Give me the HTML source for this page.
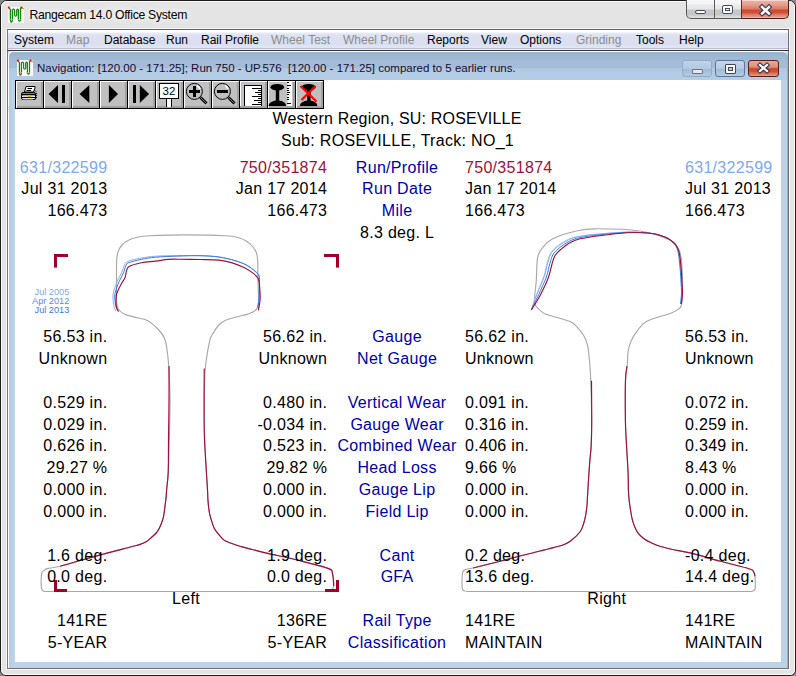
<!DOCTYPE html>
<html><head><meta charset="utf-8">
<style>
html,body{margin:0;padding:0;}
body{width:796px;height:676px;position:relative;overflow:hidden;background:#8a8a8a;font-family:"Liberation Sans",sans-serif;}
.a{position:absolute;}
#outer{left:0;top:0;width:794px;height:674px;border:1px solid #1c1c1c;border-radius:7px 7px 6px 6px;background:#e4e4e4;}
.ttl{left:29.5px;top:7.5px;font-size:12.2px;letter-spacing:-0.28px;color:#000;white-space:pre;text-shadow:0 0 6px #fff,0 0 8px #fff;}
.cb{top:0;height:19px;border:1px solid #5a5a5a;border-top:none;box-sizing:border-box;}
#menubar{left:7px;top:29px;width:782px;height:21px;box-sizing:border-box;border-top:1px solid #646464;border-left:1px solid #777;border-right:1px solid #707070;background:linear-gradient(#ffffff 0px,#ffffff 2px,#e8ebf6 3px,#dde1f1 5px,#dadeef 15px,#dde6f5 16px,#dde6f5 18px,#b8bccc 18px,#b8bccc 19px,#f4f4f8 19px)}
.mi{top:33px;font-size:12px;color:#000;white-space:pre;}
.dis{color:#8d8d8d;}
</style></head><body>
<div id="outer" class="a"></div>
<div class="a" style="left:1px;top:1px;width:792px;height:672px;border:1px solid #fafafa;border-radius:6px 6px 5px 5px;"></div>
<!-- title icon -->
<svg class="a" style="left:6px;top:4px" width="20" height="20" viewBox="6 4 20 20">
<rect x="8" y="7" width="16" height="16" fill="#fff" opacity="0.75"/>
<path d="M8.7 7.4 L10.4 9.6 V19.6 Q10.6 22 11.4 22 Q12.3 22 12.4 19.6 V10.2 Q12.6 9.2 13.5 9.2 Q14.5 9.2 14.6 10.2 V15 Q14.8 16.2 15.6 16.2 Q16.5 16.2 16.7 15 V10.2 Q16.9 9.2 17.6 9.2 Q18.4 9.2 18.4 10.2 V19.6 Q18.6 21 19.4 21 Q20.4 21 20.5 19.6 V8.7 L21.4 7.6 L23.5 8.7" fill="none" stroke="#0c8a0c" stroke-width="1.25"/>
<circle cx="8.8" cy="7.4" r="1" fill="#f00"/><circle cx="21.4" cy="7.6" r="1" fill="#f00"/>
<path d="M10.4 19 V20 M12.4 19 V20 M18.4 19 V20 M20.5 19 V20" stroke="#e09010" stroke-width="1.3"/>
<circle cx="11.3" cy="22" r="0.8" fill="#e04020"/><path d="M22 8 L23.5 8.8" stroke="#f0a030" stroke-width="1.2"/>
</svg>
<div class="a ttl">Rangecam 14.0 Office System</div>
<!-- caption buttons main -->
<div class="a cb" style="left:686px;width:29px;border-radius:0 0 0 5px;background:linear-gradient(#f7f7f7 0px,#f3f3f3 4px,#ececec 5px,#e4e4e4 9px,#c9c9c9 10px,#c6c6c6 15px,#d9d9d9 16px,#dcdcdc 18px);"></div>
<div class="a cb" style="left:714px;width:28px;border-left:1px solid #5a5a5a;border-right:none;background:linear-gradient(#f7f7f7 0px,#f3f3f3 4px,#ececec 5px,#e4e4e4 9px,#c9c9c9 10px,#c6c6c6 15px,#d9d9d9 16px,#dcdcdc 18px);"></div>
<div class="a cb" style="left:741px;width:48px;border-radius:0 0 5px 0;background:linear-gradient(#fdfdfd 0px,#f4aca4 1px,#e8a292 4px,#df8c7a 7px,#d77a66 9px,#cf4a2c 10px,#d4502e 13px,#d67260 14px,#e49c8c 17px,#f0c0b4 18px);border-color:#4a2018;border-left-color:#6a2a20;"></div>
<div class="a" style="left:695px;top:10px;width:9px;height:2px;border:1.5px solid #434a62;border-radius:2px;background:#fff;"></div>
<div class="a" style="left:722px;top:5px;width:9px;height:7px;border:1.5px solid #434a62;border-radius:2px;background:#fff;"></div>
<div class="a" style="left:725px;top:8px;width:3px;height:1px;border:1.5px solid #434a62;background:#fff;"></div>
<svg class="a" style="left:756px;top:2px" width="20" height="16" viewBox="0 0 20 16"><path d="M6 5 L13 11.5 M13 5 L6 11.5" stroke="#343a50" stroke-width="4.6" stroke-linecap="square"/><path d="M6 5 L13 11.5 M13 5 L6 11.5" stroke="#fff" stroke-width="2.4" stroke-linecap="square"/></svg>

<div id="menubar" class="a"></div>
<div class="a mi" style="left:14px">System</div>
<div class="a mi dis" style="left:66px">Map</div>
<div class="a mi" style="left:104px">Database</div>
<div class="a mi" style="left:166px">Run</div>
<div class="a mi" style="left:201px">Rail Profile</div>
<div class="a mi dis" style="left:271px">Wheel Test</div>
<div class="a mi dis" style="left:343px">Wheel Profile</div>
<div class="a mi" style="left:427px">Reports</div>
<div class="a mi" style="left:481px">View</div>
<div class="a mi" style="left:520px">Options</div>
<div class="a mi dis" style="left:576px">Grinding</div>
<div class="a mi" style="left:636px">Tools</div>
<div class="a mi" style="left:679px">Help</div>

<!-- MDI client edge -->
<div class="a" style="left:6px;top:28px;width:784px;height:642px;box-sizing:border-box;border:1px solid #f8f8f8;"></div>
<div class="a" style="left:7px;top:50px;width:782px;height:619px;box-sizing:border-box;border-top:1px solid #303030;border-left:1px solid #777;border-bottom:1px solid #707070;border-right:1px solid #707070;"></div>
<!-- child frame -->
<div class="a" style="left:8px;top:51px;width:780px;height:617px;box-sizing:border-box;border-top:1px solid #fff;border-left:1px solid #fff;border-right:1px solid #40d0f8;background:#bcd2e8;border-radius:5px 5px 0 0;"></div>
<div class="a" style="left:9px;top:52px;width:778px;height:28px;background:linear-gradient(#9bb4d0 0px,#9bb4d0 4px,#9fb8d4 4px,#9fb8d4 8px,#a4bcd8 8px,#a4bcd8 16px,#b2c6df 16px,#b4c8e0 20px,#b4cde6 20px,#b4cde6 28px);border-radius:5px 5px 0 0;"></div>
<div class="a" style="left:9px;top:80px;width:6px;height:588px;background:linear-gradient(90deg,#b4cbe4,#c0d5ea);"></div>
<div id="content" class="a" style="left:15px;top:80px;width:766px;height:582px;background:#fff;"></div>

<!-- child caption -->
<svg class="a" style="left:15px;top:57px" width="20" height="20" viewBox="6 4 20 20">
<rect x="8" y="7" width="16" height="16" fill="#fff"/>
<path d="M8.7 7.4 L10.4 9.6 V19.6 Q10.6 22 11.4 22 Q12.3 22 12.4 19.6 V10.2 Q12.6 9.2 13.5 9.2 Q14.5 9.2 14.6 10.2 V15 Q14.8 16.2 15.6 16.2 Q16.5 16.2 16.7 15 V10.2 Q16.9 9.2 17.6 9.2 Q18.4 9.2 18.4 10.2 V19.6 Q18.6 21 19.4 21 Q20.4 21 20.5 19.6 V8.7 L21.4 7.6 L23.5 8.7" fill="none" stroke="#0c8a0c" stroke-width="1.25"/>
<circle cx="8.8" cy="7.4" r="1" fill="#f00"/><circle cx="21.4" cy="7.6" r="1" fill="#f00"/>
<path d="M10.4 19 V20 M12.4 19 V20 M18.4 19 V20 M20.5 19 V20" stroke="#e09010" stroke-width="1.3"/>
<circle cx="11.3" cy="22" r="0.8" fill="#e04020"/><path d="M22 8 L23.5 8.8" stroke="#f0a030" stroke-width="1.2"/>
</svg>
<div class="a" style="left:37px;top:62.3px;font-size:11.5px;color:#180c30;white-space:pre;">Navigation: [120.00 - 171.25]; Run 750 - UP.576  [120.00 - 171.25] compared to 5 earlier runs.</div>
<div class="a" style="left:682px;top:60px;width:30px;height:17px;box-sizing:border-box;border:1px solid #94abc6;border-radius:3px;background:linear-gradient(#c0d3e8,#b3c9e2 50%,#a2bad6 52%,#b3c9e2);"></div>
<div class="a" style="left:715px;top:60px;width:30px;height:17px;box-sizing:border-box;border:1px solid #5f7696;border-radius:3px;background:linear-gradient(#c6d7ec,#b5cbe4 50%,#a0b9d6 52%,#b5cbe4);"></div>
<div class="a" style="left:748px;top:60px;width:31px;height:17px;box-sizing:border-box;border:1px solid #5a2018;border-radius:3px;background:linear-gradient(#eca698,#e0907c 40%,#c9462c 52%,#cf5238 70%,#e0a08c);"></div>
<div class="a" style="left:692px;top:69px;width:9px;height:3px;border:1px solid #6c7080;border-radius:1px;background:#e8e8e8;"></div>
<div class="a" style="left:725px;top:64px;width:9px;height:7px;border:1.5px solid #404658;border-radius:1px;background:#fff;box-sizing:border-box;width:11px;height:10px;"></div>
<div class="a" style="left:728px;top:67px;width:5px;height:4px;border:1.5px solid #404658;background:#c0d0e4;box-sizing:border-box;"></div>
<svg class="a" style="left:754px;top:60px" width="20" height="16" viewBox="0 0 20 16"><path d="M6 5 L13 11 M13 5 L6 11" stroke="#343a50" stroke-width="4.4" stroke-linecap="square"/><path d="M6 5 L13 11 M13 5 L6 11" stroke="#fff" stroke-width="2.3" stroke-linecap="square"/></svg>
<svg class="a" style="left:0;top:0" width="796" height="676" viewBox="0 0 796 676"><g transform="translate(15,80)"><rect x="0" y="0" width="29" height="29" fill="#000"/><rect x="1" y="1" width="27" height="27" fill="#fff"/><rect x="2" y="2" width="26" height="26" fill="#a0a0a0"/><rect x="2" y="2" width="24" height="24" fill="#c0c0c0"/></g><g transform="translate(43,80)"><rect x="0" y="0" width="29" height="29" fill="#000"/><rect x="1" y="1" width="27" height="27" fill="#fff"/><rect x="2" y="2" width="26" height="26" fill="#a0a0a0"/><rect x="2" y="2" width="24" height="24" fill="#c0c0c0"/></g><g transform="translate(71,80)"><rect x="0" y="0" width="29" height="29" fill="#000"/><rect x="1" y="1" width="27" height="27" fill="#fff"/><rect x="2" y="2" width="26" height="26" fill="#a0a0a0"/><rect x="2" y="2" width="24" height="24" fill="#c0c0c0"/></g><g transform="translate(99,80)"><rect x="0" y="0" width="29" height="29" fill="#000"/><rect x="1" y="1" width="27" height="27" fill="#fff"/><rect x="2" y="2" width="26" height="26" fill="#a0a0a0"/><rect x="2" y="2" width="24" height="24" fill="#c0c0c0"/></g><g transform="translate(127,80)"><rect x="0" y="0" width="29" height="29" fill="#000"/><rect x="1" y="1" width="27" height="27" fill="#fff"/><rect x="2" y="2" width="26" height="26" fill="#a0a0a0"/><rect x="2" y="2" width="24" height="24" fill="#c0c0c0"/></g><g transform="translate(155,80)"><rect x="0" y="0" width="29" height="29" fill="#000"/><rect x="1" y="1" width="27" height="27" fill="#fff"/><rect x="2" y="2" width="26" height="26" fill="#a0a0a0"/><rect x="2" y="2" width="24" height="24" fill="#c0c0c0"/></g><g transform="translate(183,80)"><rect x="0" y="0" width="29" height="29" fill="#000"/><rect x="1" y="1" width="27" height="27" fill="#fff"/><rect x="2" y="2" width="26" height="26" fill="#a0a0a0"/><rect x="2" y="2" width="24" height="24" fill="#c0c0c0"/></g><g transform="translate(211,80)"><rect x="0" y="0" width="29" height="29" fill="#000"/><rect x="1" y="1" width="27" height="27" fill="#fff"/><rect x="2" y="2" width="26" height="26" fill="#a0a0a0"/><rect x="2" y="2" width="24" height="24" fill="#c0c0c0"/></g><g transform="translate(239,80)"><rect x="0" y="0" width="29" height="29" fill="#000"/><rect x="1" y="1" width="27" height="27" fill="#fff"/><rect x="2" y="2" width="26" height="26" fill="#a0a0a0"/><rect x="2" y="2" width="24" height="24" fill="#c0c0c0"/></g><g transform="translate(267,80)"><rect x="0" y="0" width="29" height="29" fill="#000"/><rect x="1" y="1" width="27" height="27" fill="#fff"/><rect x="2" y="2" width="26" height="26" fill="#a0a0a0"/><rect x="2" y="2" width="24" height="24" fill="#c0c0c0"/></g><g transform="translate(295,80)"><rect x="0" y="0" width="29" height="29" fill="#000"/><rect x="1" y="1" width="27" height="27" fill="#fff"/><rect x="2" y="2" width="26" height="26" fill="#a0a0a0"/><rect x="2" y="2" width="24" height="24" fill="#c0c0c0"/></g>
<!-- printer bx=15 -->
<g transform="translate(15,80)">
<path d="M11 6.5 H20 V8 L18.5 12 H9.5 Z" fill="#fff" stroke="#000" stroke-width="1"/>
<path d="M12.5 8.5 H17 M11.5 10.5 H16" stroke="#000" stroke-width="1"/>
<rect x="6.5" y="12.5" width="14" height="7" rx="1.5" fill="#fff" stroke="#000" stroke-width="1"/>
<rect x="7" y="13.5" width="13" height="2" fill="#000"/>
<rect x="8" y="15.5" width="11" height="1.5" fill="#d8d8d8"/>
<rect x="13" y="15.5" width="3" height="1.5" fill="#e8c000"/>
<rect x="7" y="17" width="13" height="1" fill="#000"/>
<rect x="8" y="18.5" width="10" height="1" fill="#d0d0d0"/>
<path d="M19.5 10 L21.5 12 L21.5 18 L20 19.5" fill="none" stroke="#000" stroke-width="1" stroke-dasharray="1 1"/>
</g>
<g transform="translate(43,80)"><path d="M5.6 13.9 L15 4.9 V23 Z" fill="#000"/><rect x="19" y="5" width="3" height="18" fill="#000"/></g>
<g transform="translate(71,80)"><path d="M8.6 13.9 L18.3 4.9 V23 Z" fill="#000"/></g>
<g transform="translate(99,80)"><path d="M19 13.9 L9.9 4.9 V23 Z" fill="#000"/></g>
<g transform="translate(127,80)"><path d="M22.1 13.9 L12.8 4.9 V23 Z" fill="#000"/><rect x="6" y="5" width="3" height="18" fill="#000"/></g>
<g transform="translate(155,80)">
<rect x="4.5" y="3.5" width="19" height="15" fill="#fff" stroke="#000" stroke-width="1"/>
<text x="14" y="15" text-anchor="middle" font-family="Liberation Sans" font-size="11.5" fill="#000">32</text>
<rect x="11" y="19" width="6" height="8" fill="#fff"/>
<rect x="11" y="19" width="1" height="8" fill="#000"/><rect x="16" y="19" width="1" height="8" fill="#000"/>
</g>
<g transform="translate(183,80)">
<path d="M17.5 17.5 L23.5 23.5" stroke="#000" stroke-width="3"/><path d="M17.5 17.5 L23.5 23.5" stroke="#808080" stroke-width="1"/>
<circle cx="11.4" cy="11.4" r="8" fill="#c0c0c0" stroke="#000" stroke-width="1"/>
<path d="M14 5.5 A6.5 6.5 0 0 1 17 9" fill="none" stroke="#fff" stroke-width="1.5"/>
<rect x="6" y="10" width="11" height="3" fill="#000"/><rect x="10" y="6" width="3" height="11" fill="#000"/>
</g>
<g transform="translate(211,80)">
<path d="M17.5 17.5 L23.5 23.5" stroke="#000" stroke-width="3"/><path d="M17.5 17.5 L23.5 23.5" stroke="#808080" stroke-width="1"/>
<circle cx="11.4" cy="11.4" r="8" fill="#c0c0c0" stroke="#000" stroke-width="1"/>
<path d="M14 5.5 A6.5 6.5 0 0 1 17 9" fill="none" stroke="#fff" stroke-width="1.5"/>
<rect x="6" y="10" width="11" height="3" fill="#000"/>
</g>
<g transform="translate(239,80)">
<rect x="5.5" y="5.5" width="17" height="21" fill="#fff" stroke="#000" stroke-width="1"/>
<path d="M13 8.5 H22 M19 10.5 H22 M16 12.5 H22 M19 14.5 H22 M13 16.5 H22 M19 18.5 H22 M15 20.5 H22 M19 22.5 H22 M13 24.5 H22" stroke="#000" stroke-width="1"/>
<rect x="1" y="26" width="26" height="2" fill="#a0a0a0"/>
</g>
<g transform="translate(267,80)">
<ellipse cx="10.3" cy="7.2" rx="6.8" ry="3.3" fill="#000"/>
<rect x="8.8" y="9" width="3.4" height="12" fill="#000"/>
<path d="M1.5 26 C2 22 6 21 9 20.5 H12 C15 21 19 22 19 26 Z" fill="#000"/>
<rect x="20.5" y="2" width="4.5" height="24" fill="#fff"/>
<path d="M20 2.5 H22 M20 5.5 H24 M20 8.5 H22 M20 10.5 H22 M20 12.5 H23 M20 14.5 H22 M20 17.5 H22 M20 19.5 H22 M20 23.5 H24" stroke="#000" stroke-width="1"/>
</g>
<g transform="translate(295,80)">
<ellipse cx="13.7" cy="7.2" rx="6.8" ry="3.3" fill="#000"/>
<rect x="12.2" y="9" width="3.4" height="12" fill="#000"/>
<path d="M4.8 26 C5.3 22 9.3 21 12.3 20.5 H15.3 C18.3 21 22.3 22 22.3 26 Z" fill="#000"/>
<path d="M5.5 6 L21.5 21.5 M20.5 6 L6.5 20" stroke="#ff0000" stroke-width="2.2"/>
</g>
</svg>
<svg class="a" style="left:0;top:0" width="796" height="676" viewBox="0 0 796 676" font-family="Liberation Sans" font-size="16" letter-spacing="0.3"><path d="M44.30 591.50 C43.85 591.00 42.05 591.42 41.60 588.50 C41.15 585.58 41.20 577.00 41.60 574.00 C42.00 571.00 42.93 571.43 44.00 570.50 C45.07 569.57 45.30 569.12 48.00 568.40 C50.70 567.68 51.90 568.33 60.20 566.20 C68.50 564.07 85.92 558.83 97.80 555.60 C109.68 552.37 124.55 548.63 131.50 546.80 C138.45 544.97 136.98 545.48 139.50 544.60 C142.02 543.72 144.53 542.77 146.60 541.50 C148.67 540.23 150.12 538.63 151.90 537.00 C153.68 535.37 155.73 533.92 157.30 531.70 C158.87 529.48 160.27 526.22 161.30 523.70 C162.33 521.18 162.92 519.27 163.50 516.60 C164.08 513.93 164.37 510.95 164.80 507.70 C165.23 504.45 165.80 500.05 166.10 497.10 C166.40 494.15 166.25 494.08 166.60 490.00 C166.95 485.92 167.75 480.93 168.20 472.60 C168.65 464.27 169.00 452.10 169.30 440.00 C169.60 427.90 170.02 410.83 170.00 400.00 C169.98 389.17 169.42 380.83 169.20 375.00 C168.98 369.17 169.08 369.33 168.70 365.00 C168.32 360.67 167.58 353.43 166.90 349.00 C166.22 344.57 166.02 341.65 164.60 338.40 C163.18 335.15 161.20 332.45 158.40 329.50 C155.60 326.55 151.77 322.77 147.80 320.70 C143.83 318.63 138.47 318.17 134.60 317.10 C130.73 316.03 127.28 315.60 124.60 314.30 C121.92 313.00 119.88 311.68 118.50 309.30 C117.12 306.92 116.63 303.32 116.30 300.00 C115.97 296.68 116.45 295.73 116.50 289.40 C116.55 283.07 116.35 268.23 116.60 262.00 C116.85 255.77 117.10 254.83 118.00 252.00 C118.90 249.17 120.33 246.92 122.00 245.00 C123.67 243.08 125.50 241.78 128.00 240.50 C130.50 239.22 133.33 238.10 137.00 237.30 C140.67 236.50 141.67 236.10 150.00 235.70 C158.33 235.30 174.50 234.90 187.00 234.90 C199.50 234.90 216.50 235.27 225.00 235.70 C233.50 236.13 234.33 236.53 238.00 237.50 C241.67 238.47 244.50 239.92 247.00 241.50 C249.50 243.08 251.42 245.08 253.00 247.00 C254.58 248.92 255.70 250.50 256.50 253.00 C257.30 255.50 257.58 258.30 257.80 262.00 C258.02 265.70 257.70 268.40 257.80 275.20 C257.90 282.00 258.82 296.93 258.40 302.80 C257.98 308.67 257.07 308.52 255.30 310.40 C253.53 312.28 251.15 312.95 247.80 314.10 C244.45 315.25 238.98 316.25 235.20 317.30 C231.42 318.35 227.82 319.12 225.10 320.40 C222.38 321.68 221.08 322.57 218.90 325.00 C216.72 327.43 213.50 332.47 212.00 335.00 C210.50 337.53 210.85 336.08 209.90 340.20 C208.95 344.32 207.18 352.90 206.30 359.70 C205.42 366.50 204.90 369.28 204.60 381.00 C204.30 392.72 204.27 415.92 204.50 430.00 C204.73 444.08 205.50 455.50 206.00 465.50 C206.50 475.50 207.17 484.15 207.50 490.00 C207.83 495.85 207.70 496.90 208.00 500.60 C208.30 504.30 208.78 509.08 209.30 512.20 C209.82 515.32 210.28 516.63 211.10 519.30 C211.92 521.97 212.95 525.68 214.20 528.20 C215.45 530.72 216.97 532.42 218.60 534.40 C220.23 536.38 221.92 538.63 224.00 540.10 C226.08 541.57 228.45 542.17 231.10 543.20 C233.75 544.23 236.35 545.25 239.90 546.30 C243.45 547.35 247.77 548.32 252.40 549.50 C257.03 550.68 260.13 551.62 267.70 553.40 C275.27 555.18 287.75 557.70 297.80 560.20 C307.85 562.70 322.22 566.15 328.00 568.40 C333.78 570.65 331.55 570.77 332.50 573.70 C333.45 576.63 333.95 583.03 333.70 586.00 C333.45 588.97 331.45 590.58 331.00 591.50" fill="none" stroke="#a8a8a8" stroke-width="1.15"/><path d="M465.60 591.30 C465.05 590.80 462.82 591.32 462.30 588.30 C461.78 585.28 461.95 576.33 462.50 573.20 C463.05 570.07 463.83 570.37 465.60 569.50 C467.37 568.63 467.33 569.38 473.10 568.00 C478.87 566.62 491.92 563.33 500.20 561.20 C508.48 559.07 516.17 556.90 522.80 555.20 C529.43 553.50 535.65 552.07 540.00 551.00 C544.35 549.93 545.20 549.75 548.90 548.80 C552.60 547.85 558.65 546.55 562.20 545.30 C565.75 544.05 567.25 543.52 570.20 541.30 C573.15 539.08 577.68 534.88 579.90 532.00 C582.12 529.12 582.53 526.82 583.50 524.00 C584.47 521.18 585.12 518.22 585.70 515.10 C586.28 511.98 586.70 508.43 587.00 505.30 C587.30 502.17 587.10 502.82 587.50 496.30 C587.90 489.78 588.78 474.77 589.40 466.20 C590.02 457.63 590.82 452.60 591.20 444.90 C591.58 437.20 591.82 431.72 591.70 420.00 C591.58 408.28 591.00 385.72 590.50 374.60 C590.00 363.48 589.23 358.33 588.70 353.30 C588.17 348.27 588.13 347.37 587.30 344.40 C586.47 341.43 585.48 338.47 583.70 335.50 C581.92 332.53 578.97 328.97 576.60 326.60 C574.23 324.23 574.22 323.23 569.50 321.30 C564.78 319.37 552.78 316.48 548.30 315.00 C543.82 313.52 544.65 313.90 542.60 312.40 C540.55 310.90 537.37 308.07 536.00 306.00 C534.63 303.93 534.35 304.28 534.40 300.00 C534.45 295.72 535.77 287.35 536.30 280.30 C536.83 273.25 536.55 263.15 537.60 257.70 C538.65 252.25 540.08 250.75 542.60 247.60 C545.12 244.45 547.25 241.52 552.70 238.80 C558.15 236.08 568.28 232.97 575.30 231.30 C582.32 229.63 584.08 228.85 594.80 228.80 C605.52 228.75 627.15 229.13 639.60 231.00 C652.05 232.87 662.92 236.73 669.50 240.00 C676.08 243.27 677.03 246.43 679.10 250.60 C681.17 254.77 681.43 256.45 681.90 265.00 C682.37 273.55 682.55 294.50 681.90 301.90 C681.25 309.30 679.98 307.47 678.00 309.40 C676.02 311.33 675.20 311.52 670.00 313.50 C664.80 315.48 652.30 318.37 646.80 321.30 C641.30 324.23 639.67 327.70 637.00 331.10 C634.33 334.50 632.28 338.30 630.80 341.70 C629.32 345.10 628.70 347.50 628.10 351.50 C627.50 355.50 627.63 360.95 627.20 365.70 C626.77 370.45 625.80 370.95 625.50 380.00 C625.20 389.05 625.27 409.78 625.40 420.00 C625.53 430.22 625.85 432.42 626.30 441.30 C626.75 450.18 627.75 465.18 628.10 473.30 C628.45 481.42 628.20 485.30 628.40 490.00 C628.60 494.70 628.93 498.10 629.30 501.50 C629.67 504.90 630.15 507.58 630.60 510.40 C631.05 513.22 631.40 515.88 632.00 518.40 C632.60 520.92 633.25 523.13 634.20 525.50 C635.15 527.87 636.07 530.38 637.70 532.60 C639.33 534.82 641.77 537.10 644.00 538.80 C646.23 540.50 648.45 541.55 651.10 542.80 C653.75 544.05 656.35 545.18 659.90 546.30 C663.45 547.42 667.35 548.40 672.40 549.50 C677.45 550.60 682.22 550.95 690.20 552.90 C698.18 554.85 710.50 558.57 720.30 561.20 C730.10 563.83 743.47 566.95 749.00 568.70 C754.53 570.45 752.50 570.43 753.50 571.70 C754.50 572.97 754.75 573.40 755.00 576.30 C755.25 579.20 755.50 586.60 755.00 589.10 C754.50 591.60 752.50 590.93 752.00 591.30" fill="none" stroke="#a8a8a8" stroke-width="1.15"/><path d="M44.3 591.5 H331" stroke="#a8a8a8" stroke-width="1" shape-rendering="crispEdges"/><path d="M465.6 591.3 H752" stroke="#a8a8a8" stroke-width="1" shape-rendering="crispEdges"/><path d="M115.70 311.10 C115.43 310.31 114.50 308.69 114.04 306.36 C113.57 304.02 112.89 299.82 112.90 297.10 C112.91 294.38 113.31 292.71 114.07 290.01 C114.83 287.31 116.14 283.88 117.45 280.89 C118.76 277.89 120.78 274.61 121.92 272.02 C123.06 269.43 123.32 267.13 124.31 265.35 C125.30 263.57 125.07 262.53 127.86 261.32 C130.65 260.12 136.41 258.96 141.03 258.11 C145.66 257.25 149.47 256.62 155.61 256.21 C161.75 255.79 170.48 255.69 177.88 255.60 C185.28 255.52 193.16 255.47 200.00 255.70 C206.84 255.93 213.03 256.17 218.90 257.00 C224.77 257.83 230.60 259.35 235.20 260.70 C239.80 262.05 243.15 263.32 246.50 265.10 C249.85 266.88 253.20 269.52 255.30 271.40 C257.40 273.28 258.43 273.25 259.10 276.40 C259.77 279.55 259.35 286.32 259.30 290.30 C259.25 294.28 259.05 297.37 258.80 300.30 C258.55 303.23 257.97 306.63 257.80 307.90" fill="none" stroke="#88b0f0" stroke-width="1.0"/><path d="M117.40 310.50 C117.13 309.75 116.25 308.23 115.80 306.00 C115.35 303.77 114.70 299.68 114.70 297.10 C114.70 294.52 115.07 293.08 115.80 290.50 C116.53 287.92 117.82 284.57 119.10 281.60 C120.38 278.63 122.38 275.28 123.50 272.70 C124.62 270.12 124.97 267.75 125.80 266.10 C126.63 264.45 125.92 263.92 128.50 262.80 C131.08 261.68 136.77 260.33 141.30 259.40 C145.83 258.47 149.60 257.75 155.70 257.20 C161.80 256.65 170.52 256.35 177.90 256.10 C185.28 255.85 193.17 255.55 200.00 255.70 C206.83 255.85 213.03 256.17 218.90 257.00 C224.77 257.83 230.60 259.35 235.20 260.70 C239.80 262.05 243.15 263.32 246.50 265.10 C249.85 266.88 253.20 269.52 255.30 271.40 C257.40 273.28 258.43 273.25 259.10 276.40 C259.77 279.55 259.35 286.32 259.30 290.30 C259.25 294.28 259.05 297.37 258.80 300.30 C258.55 303.23 257.97 306.63 257.80 307.90" fill="none" stroke="#3c78e0" stroke-width="1.0"/><path d="M118.50 311.60 C118.13 310.67 116.67 308.60 116.30 306.00 C115.93 303.40 116.02 298.58 116.30 296.00 C116.58 293.42 117.13 292.58 118.00 290.50 C118.87 288.42 120.30 285.72 121.50 283.50 C122.70 281.28 124.40 279.18 125.20 277.20 C126.00 275.22 125.65 273.37 126.30 271.60 C126.95 269.83 126.60 268.07 129.10 266.60 C131.60 265.13 136.87 263.72 141.30 262.80 C145.73 261.88 151.27 261.67 155.70 261.10 C160.13 260.53 164.20 259.72 167.90 259.40 C171.60 259.08 172.55 259.18 177.90 259.20 C183.25 259.22 193.17 259.35 200.00 259.50 C206.83 259.65 213.67 259.58 218.90 260.10 C224.13 260.62 227.22 261.35 231.40 262.60 C235.58 263.85 240.23 265.72 244.00 267.60 C247.77 269.48 251.60 272.00 254.00 273.90 C256.40 275.80 257.45 276.68 258.40 279.00 C259.35 281.32 259.42 284.45 259.70 287.80 C259.98 291.15 260.32 295.33 260.10 299.10 C259.88 302.87 258.68 308.52 258.40 310.40" fill="none" stroke="#a0103c" stroke-width="1.15"/><path d="M60.20 566.20 C66.47 564.43 85.92 558.83 97.80 555.60 C109.68 552.37 124.55 548.63 131.50 546.80 C138.45 544.97 136.98 545.48 139.50 544.60 C142.02 543.72 144.53 542.77 146.60 541.50 C148.67 540.23 150.12 538.63 151.90 537.00 C153.68 535.37 155.73 533.92 157.30 531.70 C158.87 529.48 160.27 526.22 161.30 523.70 C162.33 521.18 162.92 519.27 163.50 516.60 C164.08 513.93 164.37 510.95 164.80 507.70 C165.23 504.45 165.80 500.05 166.10 497.10 C166.40 494.15 166.25 494.08 166.60 490.00 C166.95 485.92 167.88 480.93 168.20 472.60 C168.52 464.27 168.37 452.10 168.50 440.00 C168.63 427.90 168.92 412.33 169.00 400.00 C169.08 387.67 169.00 371.67 169.00 366.00" fill="none" stroke="#a0103c" stroke-width="1.15"/><path d="M204.20 368.60 C204.20 378.83 203.90 413.85 204.20 430.00 C204.50 446.15 205.45 455.50 206.00 465.50 C206.55 475.50 207.17 484.15 207.50 490.00 C207.83 495.85 207.70 496.90 208.00 500.60 C208.30 504.30 208.78 509.08 209.30 512.20 C209.82 515.32 210.28 516.63 211.10 519.30 C211.92 521.97 212.95 525.68 214.20 528.20 C215.45 530.72 216.97 532.42 218.60 534.40 C220.23 536.38 221.92 538.63 224.00 540.10 C226.08 541.57 228.45 542.17 231.10 543.20 C233.75 544.23 236.35 545.25 239.90 546.30 C243.45 547.35 247.77 548.32 252.40 549.50 C257.03 550.68 260.13 551.62 267.70 553.40 C275.27 555.18 287.75 557.70 297.80 560.20 C307.85 562.70 322.22 566.15 328.00 568.40 C333.78 570.65 331.55 570.77 332.50 573.70 C333.45 576.63 333.50 583.95 333.70 586.00" fill="none" stroke="#a0103c" stroke-width="1.15"/><path d="M531.30 309.90 C532.21 307.19 534.69 299.28 536.79 293.64 C538.88 288.01 542.12 281.30 543.86 276.12 C545.60 270.93 546.03 266.47 547.22 262.54 C548.40 258.61 549.09 255.42 550.97 252.54 C552.84 249.66 555.53 247.46 558.46 245.25 C561.38 243.05 564.99 240.82 568.53 239.30 C572.06 237.78 574.59 237.01 579.66 236.13 C584.74 235.24 591.12 234.64 598.97 233.96 C606.82 233.29 619.09 232.30 626.76 232.10 C634.43 231.91 640.29 232.48 645.00 232.80 C649.71 233.12 652.17 233.47 655.00 234.00 C657.83 234.53 659.83 235.25 662.00 236.00 C664.17 236.75 666.17 237.50 668.00 238.50 C669.83 239.50 671.58 240.75 673.00 242.00 C674.42 243.25 675.58 244.67 676.50 246.00 C677.42 247.33 677.95 248.33 678.50 250.00 C679.05 251.67 679.45 253.83 679.80 256.00 C680.15 258.17 680.33 260.33 680.60 263.00 C680.87 265.67 681.17 268.83 681.40 272.00 C681.63 275.17 681.82 278.50 682.00 282.00 C682.18 285.50 682.62 289.33 682.50 293.00 C682.38 296.67 681.50 302.17 681.30 304.00" fill="none" stroke="#a8c8f4" stroke-width="1.0"/><path d="M531.30 309.90 C532.28 307.23 535.00 299.45 537.18 293.86 C539.37 288.26 542.62 281.51 544.39 276.32 C546.16 271.13 546.61 266.63 547.79 262.72 C548.97 258.80 549.64 255.69 551.48 252.86 C553.31 250.02 555.94 247.88 558.82 245.69 C561.70 243.50 565.25 241.23 568.74 239.69 C572.22 238.15 574.69 237.37 579.74 236.45 C584.78 235.53 591.16 234.89 599.00 234.17 C606.84 233.46 619.10 232.40 626.77 232.17 C634.43 231.94 640.29 232.50 645.00 232.80 C649.71 233.10 652.17 233.47 655.00 234.00 C657.83 234.53 659.83 235.25 662.00 236.00 C664.17 236.75 666.17 237.50 668.00 238.50 C669.83 239.50 671.58 240.75 673.00 242.00 C674.42 243.25 675.58 244.67 676.50 246.00 C677.42 247.33 677.95 248.33 678.50 250.00 C679.05 251.67 679.45 253.83 679.80 256.00 C680.15 258.17 680.33 260.33 680.60 263.00 C680.87 265.67 681.17 268.83 681.40 272.00 C681.63 275.17 681.82 278.50 682.00 282.00 C682.18 285.50 682.62 289.33 682.50 293.00 C682.38 296.67 681.50 302.17 681.30 304.00" fill="none" stroke="#88b0f0" stroke-width="1.0"/><path d="M531.30 309.90 C532.52 307.35 536.13 300.10 538.64 294.63 C541.15 289.15 544.47 282.27 546.35 277.06 C548.22 271.85 548.73 267.20 549.90 263.36 C551.06 259.52 551.63 256.71 553.34 254.03 C555.05 251.35 557.46 249.44 560.16 247.30 C562.86 245.15 566.21 242.76 569.52 241.15 C572.83 239.53 575.09 238.66 580.02 237.62 C584.95 236.59 591.31 235.80 599.10 234.94 C606.89 234.07 619.13 232.79 626.78 232.44 C634.43 232.08 640.30 232.54 645.00 232.80 C649.70 233.06 652.17 233.47 655.00 234.00 C657.83 234.53 659.83 235.25 662.00 236.00 C664.17 236.75 666.20 237.46 668.00 238.50 C669.80 239.54 671.47 240.92 672.80 242.22 C674.14 243.53 675.20 245.00 676.01 246.34 C676.81 247.68 677.18 248.65 677.65 250.28 C678.11 251.92 678.49 254.02 678.81 256.16 C679.14 258.30 679.34 260.45 679.60 263.10 C679.87 265.75 680.17 268.91 680.40 272.07 C680.64 275.23 680.82 278.57 681.00 282.05 C681.18 285.53 681.58 289.32 681.50 292.97 C681.42 296.61 680.67 302.09 680.50 303.91" fill="none" stroke="#3c78e0" stroke-width="1.0"/><path d="M531.30 309.90 C532.77 307.48 537.27 300.75 540.10 295.40 C542.93 290.05 546.32 283.03 548.30 277.80 C550.28 272.57 550.85 267.77 552.00 264.00 C553.15 260.23 553.62 257.72 555.20 255.20 C556.78 252.68 558.98 251.00 561.50 248.90 C564.02 246.80 567.17 244.28 570.30 242.60 C573.43 240.92 575.48 239.95 580.30 238.80 C585.12 237.65 591.45 236.72 599.20 235.70 C606.95 234.68 619.17 233.18 626.80 232.70 C634.43 232.22 640.30 232.58 645.00 232.80 C649.70 233.02 652.17 233.47 655.00 234.00 C657.83 234.53 659.83 235.25 662.00 236.00 C664.17 236.75 666.17 237.50 668.00 238.50 C669.83 239.50 671.58 240.75 673.00 242.00 C674.42 243.25 675.58 244.67 676.50 246.00 C677.42 247.33 677.95 248.33 678.50 250.00 C679.05 251.67 679.45 253.83 679.80 256.00 C680.15 258.17 680.33 260.33 680.60 263.00 C680.87 265.67 681.17 268.83 681.40 272.00 C681.63 275.17 681.82 278.50 682.00 282.00 C682.18 285.50 682.62 289.33 682.50 293.00 C682.38 296.67 681.50 302.17 681.30 304.00" fill="none" stroke="#a0103c" stroke-width="1.15"/><path d="M473.10 568.00 C477.62 566.87 491.92 563.33 500.20 561.20 C508.48 559.07 516.17 556.90 522.80 555.20 C529.43 553.50 535.65 552.07 540.00 551.00 C544.35 549.93 545.20 549.75 548.90 548.80 C552.60 547.85 558.65 546.55 562.20 545.30 C565.75 544.05 567.25 543.52 570.20 541.30 C573.15 539.08 577.68 534.88 579.90 532.00 C582.12 529.12 582.53 526.82 583.50 524.00 C584.47 521.18 585.12 518.22 585.70 515.10 C586.28 511.98 586.70 508.43 587.00 505.30 C587.30 502.17 587.10 502.82 587.50 496.30 C587.90 489.78 588.78 474.77 589.40 466.20 C590.02 457.63 590.82 452.60 591.20 444.90 C591.58 437.20 591.65 430.68 591.70 420.00 C591.75 409.32 591.53 387.33 591.50 380.80" fill="none" stroke="#a0103c" stroke-width="1.15"/><path d="M627.00 366.00 C626.75 368.33 625.77 371.00 625.50 380.00 C625.23 389.00 625.27 409.78 625.40 420.00 C625.53 430.22 625.85 432.42 626.30 441.30 C626.75 450.18 627.75 465.18 628.10 473.30 C628.45 481.42 628.20 485.30 628.40 490.00 C628.60 494.70 628.93 498.10 629.30 501.50 C629.67 504.90 630.15 507.58 630.60 510.40 C631.05 513.22 631.40 515.88 632.00 518.40 C632.60 520.92 633.25 523.13 634.20 525.50 C635.15 527.87 636.07 530.38 637.70 532.60 C639.33 534.82 641.77 537.10 644.00 538.80 C646.23 540.50 648.45 541.55 651.10 542.80 C653.75 544.05 656.35 545.18 659.90 546.30 C663.45 547.42 667.35 548.40 672.40 549.50 C677.45 550.60 682.22 550.95 690.20 552.90 C698.18 554.85 710.50 558.57 720.30 561.20 C730.10 563.83 743.47 566.95 749.00 568.70 C754.53 570.45 752.50 570.43 753.50 571.70 C754.50 572.97 754.75 575.53 755.00 576.30" fill="none" stroke="#a0103c" stroke-width="1.15"/><path d="M54 267.6 V254 H68 M324 254 H339 V267.6 M54 580 V592 H67 M325 592 H339 V580" fill="none" stroke="#a00028" stroke-width="0"/><rect x="54" y="254" width="3" height="13.6" fill="#a00028"/><rect x="54" y="254" width="14" height="3" fill="#a00028"/><rect x="324" y="254" width="15" height="3" fill="#a00028"/><rect x="336" y="254" width="3" height="13.6" fill="#a00028"/><rect x="54" y="580" width="3" height="12" fill="#a00028"/><rect x="54" y="589" width="13" height="3" fill="#a00028"/><rect x="325" y="589" width="14" height="3" fill="#a00028"/><rect x="336" y="580" width="3" height="12" fill="#a00028"/><text x="397" y="123.6" fill="#000" text-anchor="middle" letter-spacing="0.2">Western Region, SU: ROSEVILLE</text><text x="397.5" y="145.7" fill="#000" text-anchor="middle">Sub: ROSEVILLE, Track: NO_1</text><text x="107.4" y="173.1" fill="#80a8f0" text-anchor="end">631/322599</text><text x="327.2" y="173.1" fill="#a0103c" text-anchor="end">750/351874</text><text x="397.1" y="173.1" fill="#0000a8" text-anchor="middle">Run/Profile</text><text x="465" y="173.1" fill="#a0103c" text-anchor="start">750/351874</text><text x="685" y="173.1" fill="#80a8f0" text-anchor="start">631/322599</text><text x="107.4" y="194.1" fill="#000" text-anchor="end">Jul 31 2013</text><text x="327.2" y="194.1" fill="#000" text-anchor="end">Jan 17 2014</text><text x="397.1" y="194.1" fill="#0000a8" text-anchor="middle">Run Date</text><text x="465" y="194.1" fill="#000" text-anchor="start">Jan 17 2014</text><text x="685" y="194.1" fill="#000" text-anchor="start">Jul 31 2013</text><text x="107.4" y="216.1" fill="#000" text-anchor="end">166.473</text><text x="327.2" y="216.1" fill="#000" text-anchor="end">166.473</text><text x="397.1" y="216.1" fill="#0000a8" text-anchor="middle">Mile</text><text x="465" y="216.1" fill="#000" text-anchor="start">166.473</text><text x="685" y="216.1" fill="#000" text-anchor="start">166.473</text><text x="397.1" y="237.7" fill="#000" text-anchor="middle">8.3 deg. L</text><text x="107.4" y="342.1" fill="#000" text-anchor="end">56.53 in.</text><text x="327.2" y="342.1" fill="#000" text-anchor="end">56.62 in.</text><text x="397.1" y="342.1" fill="#0000a8" text-anchor="middle">Gauge</text><text x="465" y="342.1" fill="#000" text-anchor="start">56.62 in.</text><text x="685" y="342.1" fill="#000" text-anchor="start">56.53 in.</text><text x="107.4" y="363.7" fill="#000" text-anchor="end">Unknown</text><text x="327.2" y="363.7" fill="#000" text-anchor="end">Unknown</text><text x="397.1" y="363.7" fill="#0000a8" text-anchor="middle">Net Gauge</text><text x="465" y="363.7" fill="#000" text-anchor="start">Unknown</text><text x="685" y="363.7" fill="#000" text-anchor="start">Unknown</text><text x="107.4" y="407.7" fill="#000" text-anchor="end">0.529 in.</text><text x="327.2" y="407.7" fill="#000" text-anchor="end">0.480 in.</text><text x="397.1" y="407.7" fill="#0000a8" text-anchor="middle">Vertical Wear</text><text x="465" y="407.7" fill="#000" text-anchor="start">0.091 in.</text><text x="685" y="407.7" fill="#000" text-anchor="start">0.072 in.</text><text x="107.4" y="429.6" fill="#000" text-anchor="end">0.029 in.</text><text x="327.2" y="429.6" fill="#000" text-anchor="end">-0.034 in.</text><text x="397.1" y="429.6" fill="#0000a8" text-anchor="middle">Gauge Wear</text><text x="465" y="429.6" fill="#000" text-anchor="start">0.316 in.</text><text x="685" y="429.6" fill="#000" text-anchor="start">0.259 in.</text><text x="107.4" y="451.1" fill="#000" text-anchor="end">0.626 in.</text><text x="327.2" y="451.1" fill="#000" text-anchor="end">0.523 in.</text><text x="397.1" y="451.1" fill="#0000a8" text-anchor="middle">Combined Wear</text><text x="465" y="451.1" fill="#000" text-anchor="start">0.406 in.</text><text x="685" y="451.1" fill="#000" text-anchor="start">0.349 in.</text><text x="107.4" y="472.9" fill="#000" text-anchor="end">29.27 %</text><text x="327.2" y="472.9" fill="#000" text-anchor="end">29.82 %</text><text x="397.1" y="472.9" fill="#0000a8" text-anchor="middle">Head Loss</text><text x="465" y="472.9" fill="#000" text-anchor="start">9.66 %</text><text x="685" y="472.9" fill="#000" text-anchor="start">8.43 %</text><text x="107.4" y="494.6" fill="#000" text-anchor="end">0.000 in.</text><text x="327.2" y="494.6" fill="#000" text-anchor="end">0.000 in.</text><text x="397.1" y="494.6" fill="#0000a8" text-anchor="middle">Gauge Lip</text><text x="465" y="494.6" fill="#000" text-anchor="start">0.000 in.</text><text x="685" y="494.6" fill="#000" text-anchor="start">0.000 in.</text><text x="107.4" y="516.5" fill="#000" text-anchor="end">0.000 in.</text><text x="327.2" y="516.5" fill="#000" text-anchor="end">0.000 in.</text><text x="397.1" y="516.5" fill="#0000a8" text-anchor="middle">Field Lip</text><text x="465" y="516.5" fill="#000" text-anchor="start">0.000 in.</text><text x="685" y="516.5" fill="#000" text-anchor="start">0.000 in.</text><text x="107.4" y="560.9" fill="#000" text-anchor="end">1.6 deg.</text><text x="327.2" y="560.9" fill="#000" text-anchor="end">1.9 deg.</text><text x="397.1" y="560.9" fill="#0000a8" text-anchor="middle">Cant</text><text x="465" y="560.9" fill="#000" text-anchor="start">0.2 deg.</text><text x="685" y="560.9" fill="#000" text-anchor="start">-0.4 deg.</text><text x="107.4" y="582.1" fill="#000" text-anchor="end">0.0 deg.</text><text x="327.2" y="582.1" fill="#000" text-anchor="end">0.0 deg.</text><text x="397.1" y="582.1" fill="#0000a8" text-anchor="middle">GFA</text><text x="465" y="582.1" fill="#000" text-anchor="start">13.6 deg.</text><text x="685" y="582.1" fill="#000" text-anchor="start">14.4 deg.</text><text x="107.4" y="626.3" fill="#000" text-anchor="end">141RE</text><text x="327.2" y="626.3" fill="#000" text-anchor="end">136RE</text><text x="397.1" y="626.3" fill="#0000a8" text-anchor="middle">Rail Type</text><text x="465" y="626.3" fill="#000" text-anchor="start">141RE</text><text x="685" y="626.3" fill="#000" text-anchor="start">141RE</text><text x="107.4" y="647.9" fill="#000" text-anchor="end">5-YEAR</text><text x="327.2" y="647.9" fill="#000" text-anchor="end">5-YEAR</text><text x="397.1" y="647.9" fill="#0000a8" text-anchor="middle">Classification</text><text x="465" y="647.9" fill="#000" text-anchor="start">MAINTAIN</text><text x="685" y="647.9" fill="#000" text-anchor="start">MAINTAIN</text><text x="186" y="604.3" fill="#000" text-anchor="middle">Left</text><text x="606.8" y="604.3" fill="#000" text-anchor="middle">Right</text><text x="69.3" y="294.8" fill="#80a8f0" text-anchor="end" font-size="9.2" letter-spacing="0">Jul 2005</text><text x="69.3" y="303.9" fill="#5a8ce8" text-anchor="end" font-size="9.2" letter-spacing="0">Apr 2012</text><text x="69.3" y="313.3" fill="#3c78e0" text-anchor="end" font-size="9.2" letter-spacing="0">Jul 2013</text></svg>
</body></html>
